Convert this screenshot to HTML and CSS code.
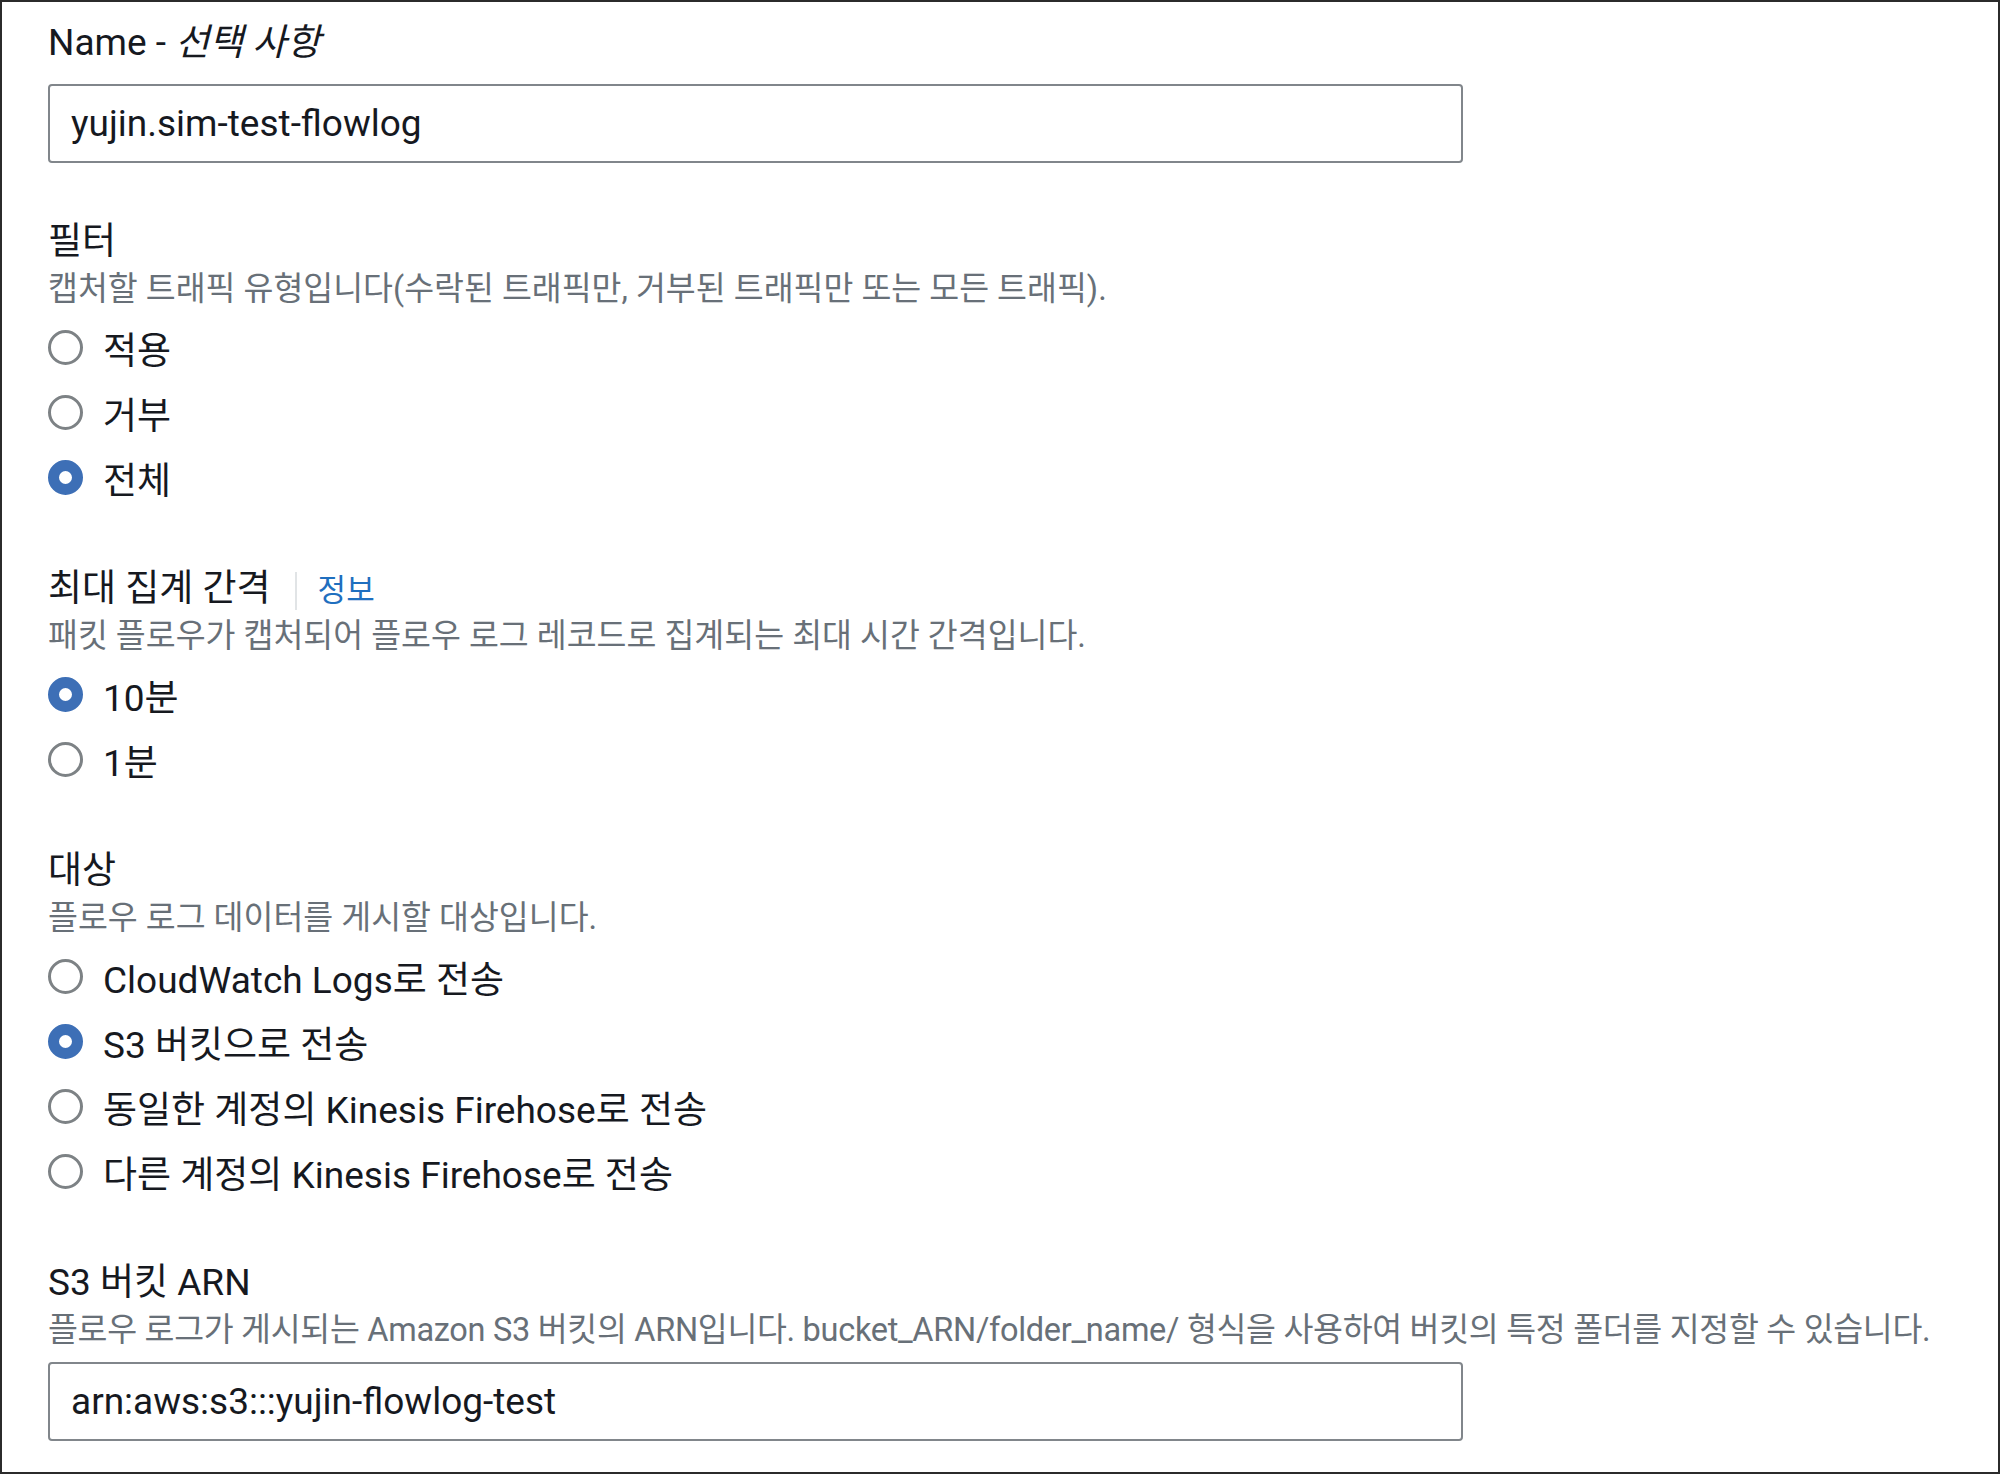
FILE: index.html
```html
<!DOCTYPE html>
<html lang="ko">
<head>
    <meta charset="UTF-8">
    <meta name="viewport" content="width=device-width, initial-scale=1.0">
    <title>Create flow log</title>
    <link rel="stylesheet" href="styles.css">
</head>
<body>
    <div class="frame">
        <div class="field">
            <label class="field-label" for="flowName">Name - <em>선택 사항</em></label>
            <input id="flowName" class="text-input" type="text" value="yujin.sim-test-flowlog">
        </div>

        <div class="field">
            <div class="field-label">필터</div>
            <div class="field-desc">캡처할 트래픽 유형입니다(수락된 트래픽만, 거부된 트래픽만 또는 모든 트래픽).</div>
            <div class="radio-group">
                <label class="radio"><input type="radio" name="filter"> 적용</label>
                <label class="radio"><input type="radio" name="filter"> 거부</label>
                <label class="radio"><input type="radio" name="filter" checked> 전체</label>
            </div>
        </div>

        <div class="field">
            <div class="field-label">최대 집계 간격<a class="info-link" href="#">정보</a></div>
            <div class="field-desc">패킷 플로우가 캡처되어 플로우 로그 레코드로 집계되는 최대 시간 간격입니다.</div>
            <div class="radio-group">
                <label class="radio"><input type="radio" name="interval" checked> 10분</label>
                <label class="radio"><input type="radio" name="interval"> 1분</label>
            </div>
        </div>

        <div class="field">
            <div class="field-label">대상</div>
            <div class="field-desc">플로우 로그 데이터를 게시할 대상입니다.</div>
            <div class="radio-group">
                <label class="radio"><input type="radio" name="dest"> CloudWatch Logs로 전송</label>
                <label class="radio"><input type="radio" name="dest" checked> S3 버킷으로 전송</label>
                <label class="radio"><input type="radio" name="dest"> 동일한 계정의 Kinesis Firehose로 전송</label>
                <label class="radio"><input type="radio" name="dest"> 다른 계정의 Kinesis Firehose로 전송</label>
            </div>
        </div>

        <div class="field">
            <label class="field-label" for="bucketArn">S3 버킷 ARN</label>
            <div class="field-desc field-desc-long">플로우 로그가 게시되는 Amazon S3 버킷의 ARN입니다. bucket_ARN/folder_name/ 형식을 사용하여 버킷의 특정 폴더를 지정할 수 있습니다.</div>
            <input id="bucketArn" class="text-input arn-input" type="text" value="arn:aws:s3:::yujin-flowlog-test">
        </div>
    </div>
</body>
</html>
```

FILE: styles.css
```css
body {
    margin: 0;
    padding: 0;
    background-color: #ffffff;
    font-family: Roboto, "Noto Sans CJK KR", sans-serif;
    color: #16191f;
}
.frame {
    box-sizing: border-box;
    height: 1474px;
    border: 2px solid #2b2b2b;
    padding: 14px 46px 0 46px;
    background: #ffffff;
}
.field {
    display: flex;
    flex-direction: column;
    align-items: flex-start;
    margin-bottom: 52px;
}
.field-label {
    display: block;
    padding-top: 4px;
    font-size: 37px;
    line-height: 46px;
    color: #16191f;
}
.field-label em {
    font-style: italic;
}
.field-desc {
    font-size: 32.5px;
    line-height: 48px;
    color: #687078;
    white-space: nowrap;
}
.field-desc-long {
    letter-spacing: -0.3px;
}
.info-link {
    display: inline-block;
    margin-left: 24px;
    padding-left: 21px;
    border-left: 2px solid #e1e4e6;
    line-height: 38px;
    font-size: 31px;
    color: #1f6fbf;
    text-decoration: none;
    vertical-align: middle;
}
.text-input {
    box-sizing: border-box;
    width: 1415px;
    height: 79px;
    margin-top: 18px;
    padding: 0 21px;
    border: 2px solid #81868b;
    border-radius: 4px;
    font-family: Roboto, "Noto Sans CJK KR", sans-serif;
    font-size: 37px;
    color: #16191f;
    background: #ffffff;
    outline: none;
}
.arn-input {
    margin-top: 8px;
}
.radio-group {
    display: flex;
    flex-direction: column;
    margin-top: 2px;
}
.radio {
    display: flex;
    align-items: center;
    gap: 20px;
    height: 65px;
    font-size: 37px;
    color: #16191f;
}
.radio input {
    appearance: none;
    -webkit-appearance: none;
    box-sizing: border-box;
    width: 35px;
    height: 35px;
    margin: 0;
    border: 3px solid #7d8285;
    border-radius: 50%;
    background: #ffffff;
}
.radio input:checked {
    border: 11px solid #3d6fb6;
}
```
